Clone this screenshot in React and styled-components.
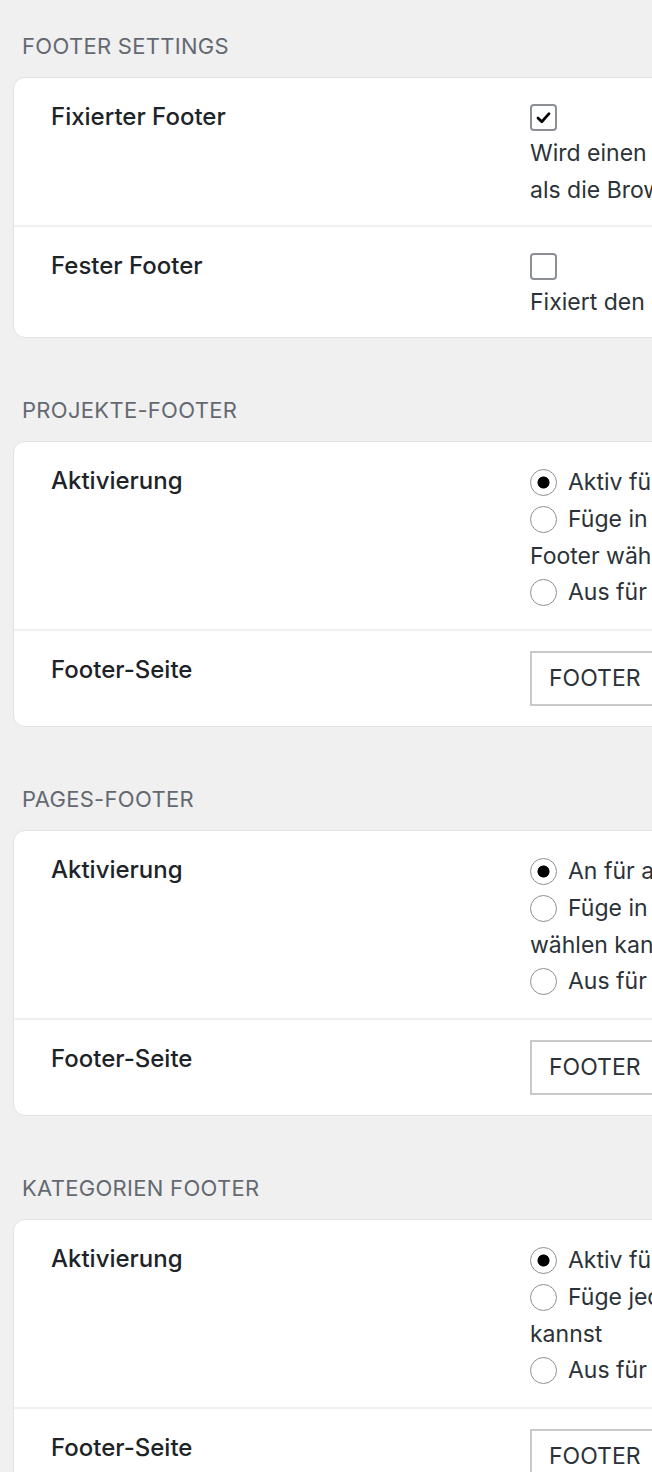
import React from "react";
import styled, { createGlobalStyle } from "styled-components";

const Global = createGlobalStyle`
  html, body {
    margin: 0;
    padding: 0;
    background: #f0f0f1;
    overflow: hidden;
  }
  body {
    font-family: Inter, "Noto Sans", "Liberation Sans", sans-serif;
    color: #2c3338;
    -webkit-font-smoothing: antialiased;
  }
`;

const Page = styled.div`
  width: 1900px;
  padding: 34px 0 0 13px;
`;

const Section = styled.section`
  margin-bottom: 60px;
`;

const SectionTitle = styled.h2`
  margin: 0 0 19px 9px;
  font-size: 22px;
  line-height: 24px;
  font-weight: 400;
  letter-spacing: 0.3px;
  text-transform: uppercase;
  color: #646970;
`;

const Card = styled.div`
  background: #fff;
  border: 1px solid #e2e2e4;
  border-radius: 12px;
  overflow: hidden;
`;

const Row = styled.div`
  display: grid;
  grid-template-columns: 479px 1fr;
  padding: 20px 0 ${(p) => p.$bottom ?? 16}px 37px;
  & + & {
    border-top: 2px solid #f0f0f1;
  }
`;

const Label = styled.div`
  font-size: 24px;
  line-height: 37px;
  font-weight: 500;
  color: #1d2327;
`;

const Field = styled.div`
  font-size: 23px;
  line-height: 36.75px;
  color: #2c3338;
`;

const Box = styled.span`
  display: flex;
  align-items: center;
  justify-content: center;
  box-sizing: border-box;
  width: 27px;
  height: 27px;
  margin-top: 6px;
  border: 2px solid #8c8f94;
  border-radius: 4px;
  background: #fff;
`;

const Description = styled.p`
  margin: 4px 0 0;
  line-height: 37px;
`;

const RadioGroup = styled.div`
  margin: 2px 0 3px;
`;

const Option = styled.div``;

const Dot = styled.span`
  display: inline-block;
  box-sizing: border-box;
  width: 27px;
  height: 27px;
  margin-right: 11px;
  vertical-align: -6px;
  border: 1.5px solid #8c8f94;
  border-radius: 50%;
  background: ${(p) =>
    p.$on
      ? "radial-gradient(circle, #000 0 5.6px, #fff 6.4px)"
      : "#fff"};
`;

const Select = styled.div`
  box-sizing: border-box;
  display: flex;
  align-items: center;
  width: 420px;
  height: 55px;
  padding: 0 17px;
  border: 2px solid #c9c9cb;
  background: #fff;
  font-size: 23px;
  color: #2c3338;
`;

const Check = () => (
  <svg width="17" height="17" viewBox="0 0 20 20" aria-hidden="true">
    <path
      d="M3.5 10.5 L8 15 L16.5 5.5"
      fill="none"
      stroke="#000"
      strokeWidth="3.2"
      strokeLinecap="round"
      strokeLinejoin="round"
    />
  </svg>
);

const CheckboxRow = ({ label, checked, children }) => (
  <Row>
    <Label>{label}</Label>
    <Field>
      <Box>{checked && <Check />}</Box>
      <Description>{children}</Description>
    </Field>
  </Row>
);

const RadioRow = ({ options }) => (
  <Row $bottom={15}>
    <Label>Aktivierung</Label>
    <Field>
      <RadioGroup>
        {options.map((o, i) => (
          <Option key={i}>
            <Dot $on={i === 0} />
            {o}
          </Option>
        ))}
      </RadioGroup>
    </Field>
  </Row>
);

const SelectRow = () => (
  <Row $bottom={20}>
    <Label>Footer-Seite</Label>
    <Field>
      <Select>FOOTER</Select>
    </Field>
  </Row>
);

const sections = [
  {
    title: "Projekte-Footer",
    options: [
      "Aktiv für alle Projekte",
      <>
        Füge in jedes Projekt ein Auswahlfeld ein, in dem du einen eigenen
        <br />
        Footer wählen kannst
      </>,
      "Aus für alle Projekte",
    ],
  },
  {
    title: "Pages-Footer",
    options: [
      "An für alle Seiten",
      <>
        Füge in jede Seite ein Auswahlfeld ein, in dem du einen eigenen Footer
        <br />
        wählen kannst
      </>,
      "Aus für alle Seiten",
    ],
  },
  {
    title: "Kategorien Footer",
    options: [
      "Aktiv für alle Kategorien",
      <>
        Füge jeder Kategorie ein Auswahlfeld hinzu, in dem du einen Footer wählen
        <br />
        kannst
      </>,
      "Aus für alle Kategorien",
    ],
  },
];

export default function App() {
  return (
    <>
      <Global />
      <Page>
        <Section>
          <SectionTitle>Footer Settings</SectionTitle>
          <Card>
            <CheckboxRow label="Fixierter Footer" checked>
              Wird einen Footer am Seitenende fixieren, wenn der Inhalt kürzer ist
              <br />
              als die Browserhöhe.
            </CheckboxRow>
            <CheckboxRow label="Fester Footer">
              Fixiert den Footer am unteren Rand des Browserfensters.
            </CheckboxRow>
          </Card>
        </Section>
        {sections.map((s) => (
          <Section key={s.title}>
            <SectionTitle>{s.title}</SectionTitle>
            <Card>
              <RadioRow options={s.options} />
              <SelectRow />
            </Card>
          </Section>
        ))}
      </Page>
    </>
  );
}
